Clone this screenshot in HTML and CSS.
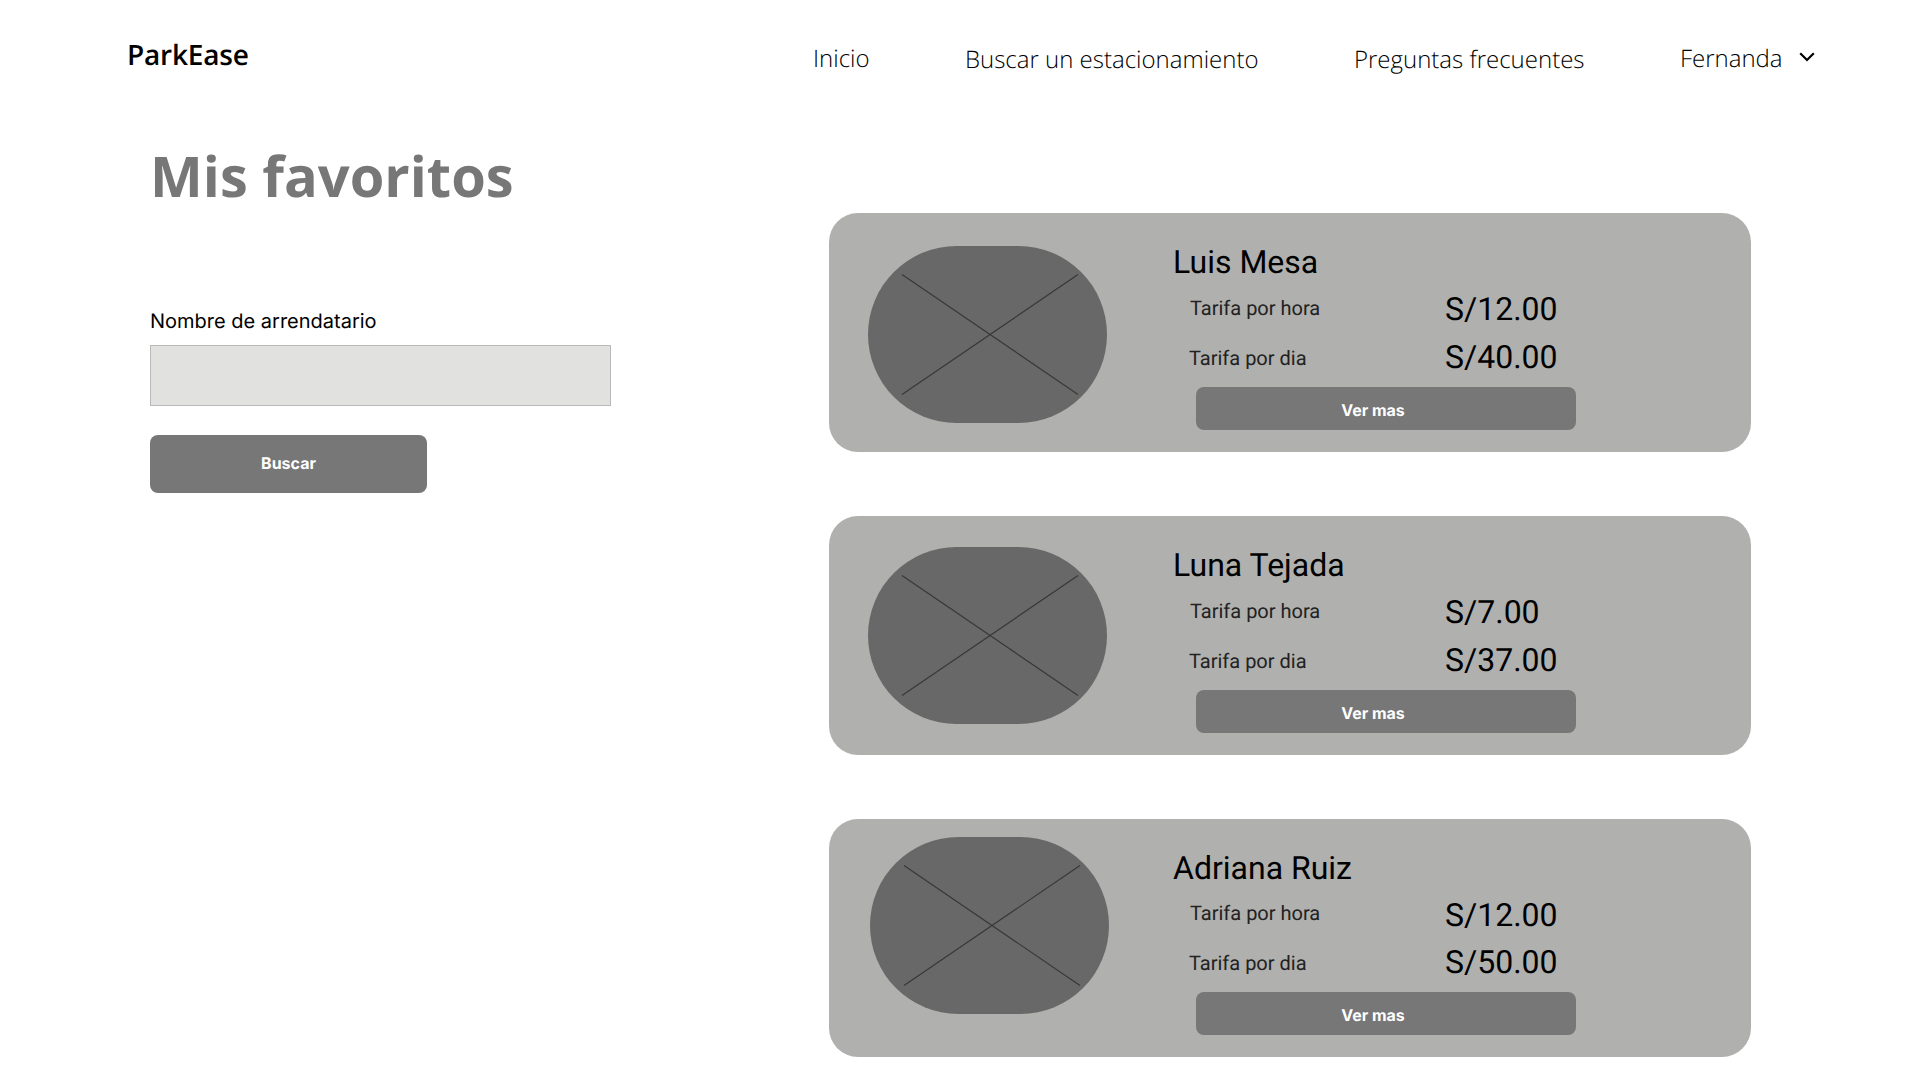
FILE: index.html
```html
<!DOCTYPE html>
<html lang="es">
<head>
<meta charset="utf-8">
<title>ParkEase - Mis favoritos</title>
<link rel="stylesheet" href="styles.css">
</head>
<body>
<header class="header">
  <div class="brand">ParkEase</div>
  <nav class="nav">
    <a class="nav-link">Inicio</a>
    <a class="nav-link nav-link-low">Buscar un estacionamiento</a>
    <a class="nav-link nav-link-low">Preguntas frecuentes</a>
    <a class="nav-link nav-user">Fernanda
      <svg class="chevron" width="16" height="10" viewBox="0 0 16 10"><path d="M1.2 1.2 8 8 14.8 1.2" fill="none" stroke="#000" stroke-width="2.2"/></svg>
    </a>
  </nav>
</header>
<main class="main">
  <section class="search">
    <h1 class="title">Mis favoritos</h1>
    <label class="label" for="owner">Nombre de arrendatario</label>
    <input class="field" id="owner" type="text">
    <button class="btn btn-search">Buscar</button>
  </section>
  <section class="list">
    <article class="card">
      <svg class="photo" width="239" height="177" viewBox="0 0 239 177"><rect width="239" height="177" rx="88.5" fill="#686868"/><path d="M34 28.5 210 148.500M34 148.500 210 28.500" stroke="#383838" stroke-width="1.2"/></svg>
      <div class="info">
        <h2 class="name">Luis Mesa</h2>
        <div class="rates">
          <div class="rate-labels"><span class="rate-hour">Tarifa por hora</span><span>Tarifa por dia</span></div>
          <div class="prices"><span>S/12.00</span><span>S/40.00</span></div>
        </div>
        <button class="btn btn-more">Ver mas</button>
      </div>
    </article>
    <article class="card card-second">
      <svg class="photo" width="239" height="177" viewBox="0 0 239 177"><rect width="239" height="177" rx="88.5" fill="#686868"/><path d="M34 28.5 210 148.500M34 148.500 210 28.500" stroke="#383838" stroke-width="1.2"/></svg>
      <div class="info">
        <h2 class="name">Luna Tejada</h2>
        <div class="rates">
          <div class="rate-labels"><span class="rate-hour">Tarifa por hora</span><span>Tarifa por dia</span></div>
          <div class="prices"><span>S/7.00</span><span>S/37.00</span></div>
        </div>
        <button class="btn btn-more">Ver mas</button>
      </div>
    </article>
    <article class="card card-third">
      <svg class="photo" width="239" height="177" viewBox="0 0 239 177"><rect width="239" height="177" rx="88.5" fill="#686868"/><path d="M34 28.5 210 148.500M34 148.500 210 28.500" stroke="#383838" stroke-width="1.2"/></svg>
      <div class="info">
        <h2 class="name">Adriana Ruiz</h2>
        <div class="rates">
          <div class="rate-labels"><span class="rate-hour">Tarifa por hora</span><span>Tarifa por dia</span></div>
          <div class="prices"><span>S/12.00</span><span>S/50.00</span></div>
        </div>
        <button class="btn btn-more">Ver mas</button>
      </div>
    </article>
  </section>
</main>
</body>
</html>
```
FILE: styles.css
```css
* { box-sizing: border-box; }
body {
  margin: 0;
  width: 1920px;
  height: 1080px;
  overflow: hidden;
  background: #fff;
  color: #000;
  font-family: Inter, sans-serif;
  text-rendering: geometricPrecision;
}
.header {
  display: flex;
  align-items: flex-start;
  height: 141px;
  padding-left: 127px;
  font-family: "Open Sans", sans-serif;
}
.brand {
  width: 686px;
  padding-top: 35px;
  font-size: 28px;
  line-height: 40px;
  font-weight: 600;
  letter-spacing: -0.2px;
}
.nav {
  display: flex;
  gap: 95.4px;
  padding-top: 39px;
}
.nav-link {
  display: flex;
  font-size: 24px;
  line-height: 40px;
  font-weight: 300;
  white-space: nowrap;
}
.nav-link-low { padding-top: 1px; }
.nav-user { gap: 16px; }
.chevron { margin-top: 13px; }
.main { display: flex; }
.search {
  display: flex;
  flex-direction: column;
  align-items: flex-start;
  width: 679px;
  margin-left: 150px;
}
.title {
  margin: 0;
  font-family: "Open Sans", sans-serif;
  font-size: 56px;
  line-height: 70px;
  font-weight: 700;
  color: #777;
}
.label {
  margin-top: 98px;
  font-size: 20px;
  line-height: 24px;
}
.field {
  width: 461px;
  height: 61px;
  margin-top: 12px;
  border: 1px solid #b9b9b9;
  border-radius: 0;
  background: #e1e1e0;
}
.btn {
  padding: 0;
  border: 0;
  border-radius: 8px;
  background: #777;
  color: #fff;
  font: 700 16px/20px Inter, sans-serif;
  text-rendering: inherit;
}
.btn-search {
  width: 277px;
  height: 58px;
  margin-top: 29px;
  padding-bottom: 2px;
}
.list {
  display: flex;
  flex-direction: column;
  gap: 64px;
  margin-top: 72px;
}
.card {
  display: flex;
  align-items: flex-start;
  width: 922px;
  height: 239px;
  padding: 29px 0 0 39px;
  border-radius: 29px;
  background: #b0b0ae;
}
.card-third { height: 238px; }
.photo { margin: 4px 66px 0 0; }
.card-second .photo { margin-top: 2px; }
.card-third .photo { margin: -11px 64px 0 2px; }
.info {
  font-family: Roboto, sans-serif;
}
.name {
  margin: 0;
  font-size: 32px;
  line-height: 40px;
  font-weight: 400;
}
.rates { display: flex; }
.rate-labels {
  display: flex;
  flex-direction: column;
  gap: 26px;
  width: 272px;
  padding: 14px 0 0 16px;
  font-size: 20px;
  line-height: 24px;
  color: #222;
}
.rate-hour { padding-left: 1px; }
.prices {
  display: flex;
  flex-direction: column;
  gap: 8px;
  padding-top: 7px;
  font-size: 32px;
  line-height: 40px;
}
.btn-more {
  display: block;
  width: 380px;
  height: 43px;
  margin: 10px 0 0 23px;
  padding: 2px 26px 0 0;
}
.card-third .rate-labels { padding-top: 13px; }
.card-third .prices { gap: 7px; }
```
